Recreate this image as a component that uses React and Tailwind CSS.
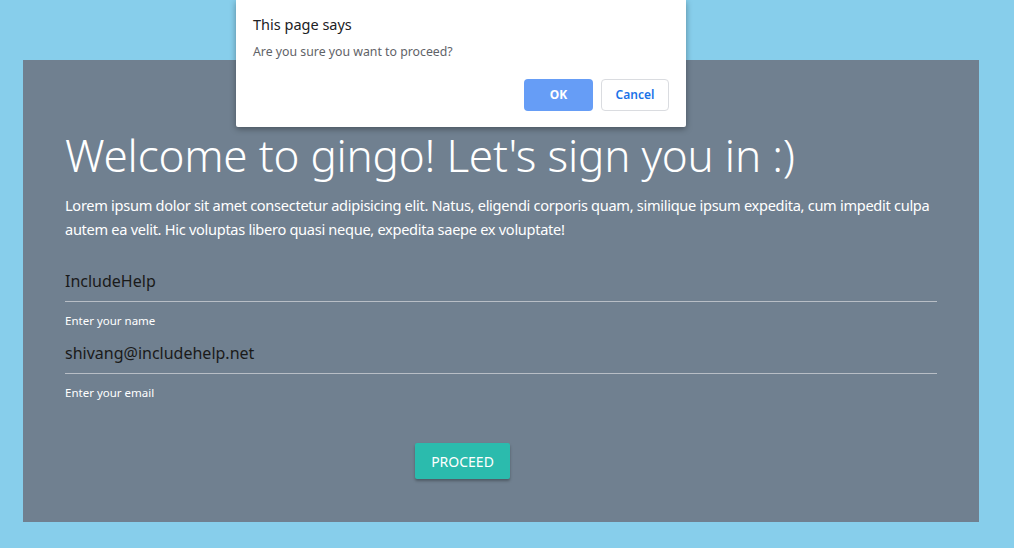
import React from 'react';

const font = { fontFamily: '"Noto Sans", "Open Sans", Arial, sans-serif' };

const Field = ({ value, label }) => (
  <div className="mb-[4px]">
    <div className="h-[42px] flex items-center border-b border-[#b8bec6] text-[16px] text-[#1a1a1a]">
      {value}
    </div>
    <div className="mt-[12px] text-[11.5px] text-white leading-[14px]">{label}</div>
  </div>
);

export default function App() {
  return (
    <div className="relative w-[1014px] h-[548px] bg-[#87ceeb] overflow-hidden" style={font}>
      <div className="pt-[60px] pl-[23px]">
        <div className="w-[956px] h-[462px] bg-[#708090] px-[42px] pt-[70px]">
          <h1 className="text-[44px] leading-[50px] text-white font-light tracking-[-0.2px]">
            Welcome to gingo! Let's sign you in :)
          </h1>
          <p className="mt-[13px] text-[14.6px] leading-[24px] text-white tracking-[-0.3px]">
            Lorem ipsum dolor sit amet consectetur adipisicing elit. Natus, eligendi corporis quam, similique ipsum expedita, cum impedit culpa autem ea velit. Hic voluptas libero quasi neque, expedita saepe ex voluptate!
          </p>
          <div className="mt-[19px]">
            <Field value="IncludeHelp" label="Enter your name" />
            <Field value="shivang@includehelp.net" label="Enter your email" />
          </div>
          <div className="mt-[43px] pl-[350px]">
            <button className="w-[95px] h-[36px] rounded-[2px] bg-[#2bbbad] text-white text-[14px] uppercase shadow-[0_2px_3px_rgba(0,0,0,0.3)]">
              Proceed
            </button>
          </div>
        </div>
      </div>

      {/* confirm dialog */}
      <div className="absolute left-[236px] top-0 w-[450px] h-[127px] bg-white rounded-b-[2px] shadow-[0_2px_6px_rgba(0,0,0,0.35)] px-[17px]">
        <div className="pt-[14px] text-[14.5px] leading-[20px] text-[#202124]">This page says</div>
        <div className="mt-[9px] text-[12.3px] leading-[18px] text-[#5f6368]">Are you sure you want to proceed?</div>
        <div className="mt-[18px] flex justify-end gap-[8px]">
          <button className="w-[69px] h-[32px] rounded-[4px] bg-[#669df6] text-white text-[12px] font-bold">OK</button>
          <button className="w-[68px] h-[32px] rounded-[4px] border border-[#dadce0] bg-white text-[#1a73e8] text-[12px] font-semibold">Cancel</button>
        </div>
      </div>
    </div>
  );
}
